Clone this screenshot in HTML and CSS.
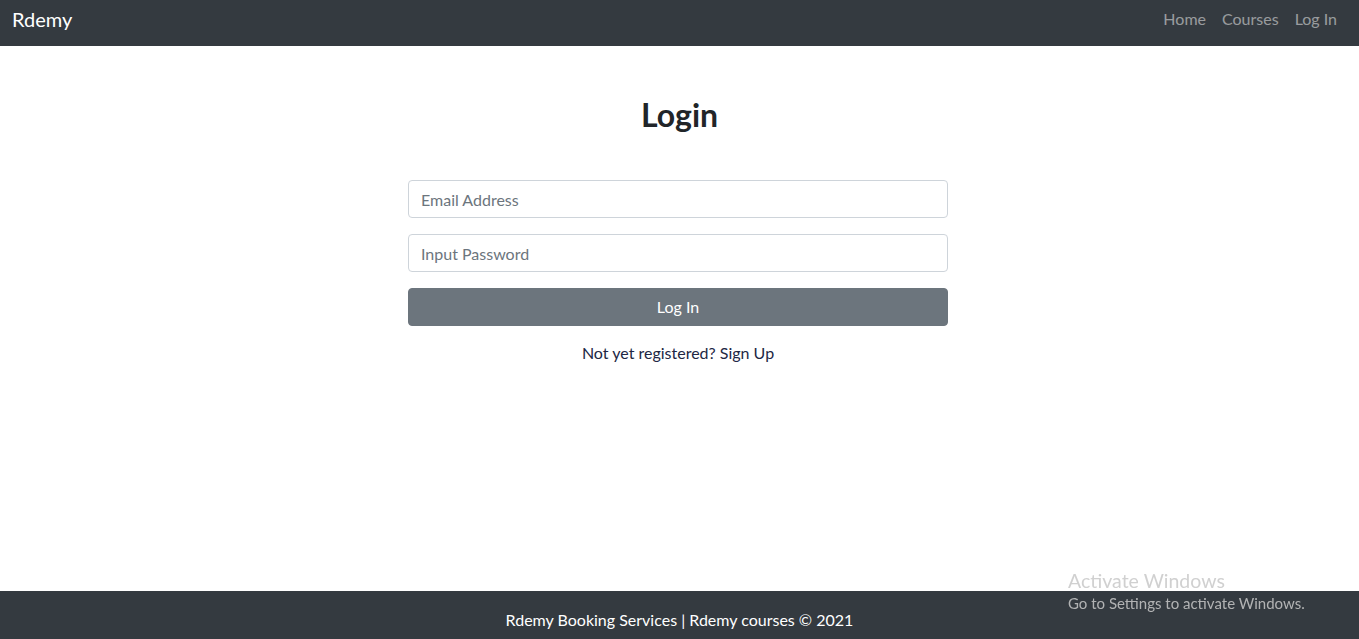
FILE: index.html
```html
<!DOCTYPE html>
<html lang="en">
<head>
<meta charset="utf-8">
<title>Rdemy - Login</title>
<link rel="stylesheet" href="styles.css">
</head>
<body>
<nav class="navbar">
  <a class="brand" href="#">Rdemy</a>
  <ul class="nav-links">
    <li><a href="#">Home</a></li>
    <li><a href="#">Courses</a></li>
    <li><a href="#">Log In</a></li>
  </ul>
</nav>
<main class="main">
  <h2 class="title">Login</h2>
  <form class="login-form">
    <input class="field" type="email" placeholder="Email Address">
    <input class="field" type="password" placeholder="Input Password">
    <button class="btn" type="button">Log In</button>
    <p class="signup">Not yet registered? <a href="#">Sign Up</a></p>
  </form>
</main>
<footer class="footer">Rdemy Booking Services | Rdemy courses © 2021</footer>
<div class="watermark">
  <div class="wm-title">Activate Windows</div>
  <div class="wm-sub">Go to Settings to activate Windows.</div>
</div>
</body>
</html>
```
FILE: styles.css
```css
* { box-sizing: border-box; }
html, body { height: 100%; }
body {
  margin: 0;
  font-family: "Lato", "Noto Sans", sans-serif;
  font-size: 16px;
  line-height: 1.5;
  color: #212529;
  background: #fff;
  display: flex;
  flex-direction: column;
  min-height: 100vh;
}
.navbar {
  height: 46px;
  background: #343a40;
  display: flex;
  align-items: flex-start;
  justify-content: space-between;
  padding: 4px 14px 0 12px;
  flex-shrink: 0;
}
.brand {
  color: #fff;
  font-size: 20px;
  text-decoration: none;
  line-height: 30px;
}
.nav-links {
  list-style: none;
  margin: 0;
  padding: 0;
  display: flex;
}
.nav-links a {
  display: block;
  padding: 3px 8px;
  color: rgba(255,255,255,.5);
  text-decoration: none;
  line-height: 24px;
}
.main {
  flex: 1;
  display: flex;
  flex-direction: column;
  align-items: center;
  padding-top: 50px;
}
.title {
  margin: 0 0 46px;
  font-size: 32px;
  font-weight: 700;
  line-height: 38px;
  color: #212529;
}
.login-form {
  width: 540px;
  margin-right: 3px;
  display: flex;
  flex-direction: column;
}
.field {
  height: 38px;
  padding: 6px 12px;
  font: inherit;
  color: #495057;
  border: 1px solid #ced4da;
  border-radius: 4px;
  margin-bottom: 16px;
  background: #fff;
}
.field::placeholder { color: #6c757d; }
.btn {
  height: 38px;
  font: inherit;
  color: #fff;
  background: #6c757d;
  border: 1px solid #6c757d;
  border-radius: 4px;
}
.signup {
  margin: 15px 0 0;
  text-align: center;
  color: #212744;
}
.signup a { color: #212744; text-decoration: none; }
.footer {
  height: 48px;
  flex-shrink: 0;
  background: #343a40;
  color: #fff;
  display: flex;
  align-items: center;
  justify-content: center;
  padding-top: 10px;
}
.watermark {
  position: fixed;
  left: 1068px;
  top: 569px;
  color: rgba(200,200,200,.85);
  line-height: 1.25;
}
.wm-title { font-size: 19.5px; }
.wm-sub { font-size: 15px; margin-top: 1px; }
```
